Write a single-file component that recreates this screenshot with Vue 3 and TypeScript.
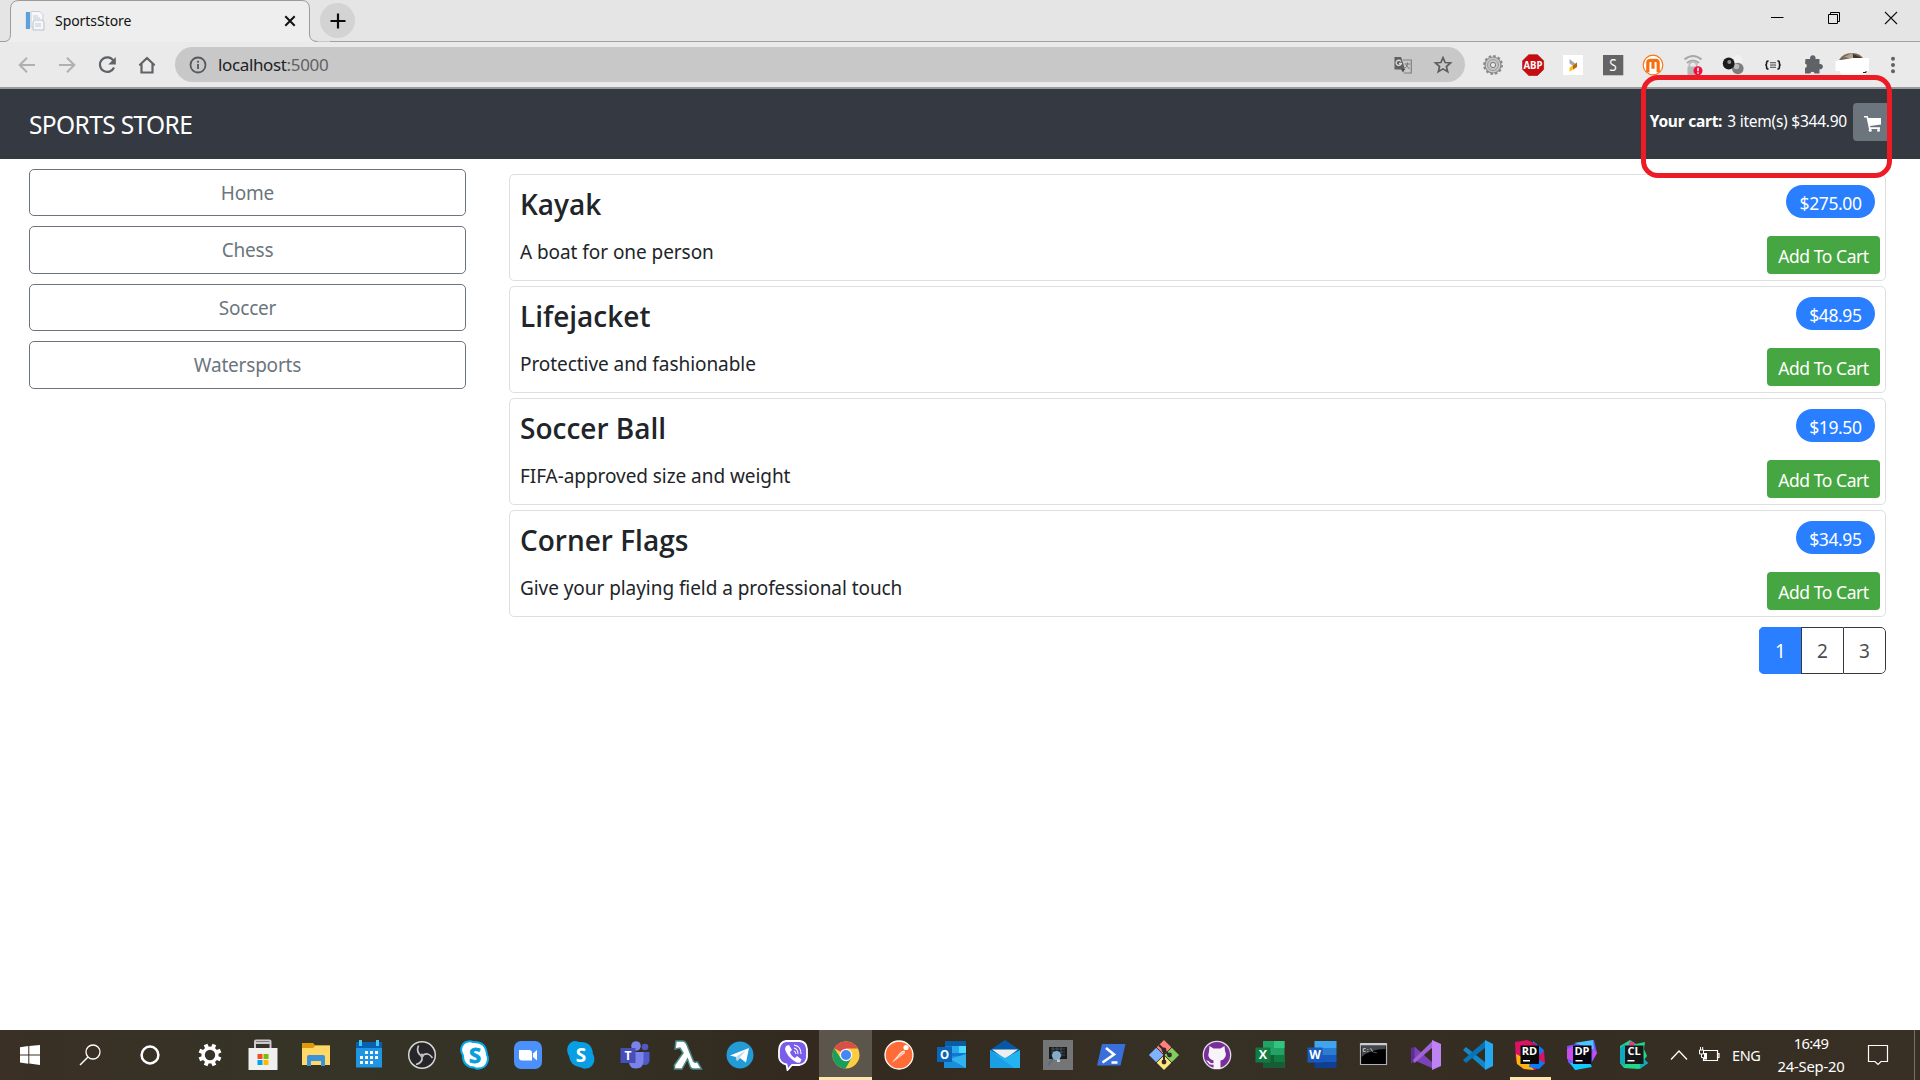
<script setup lang="ts">
interface Product { name: string; description: string; price: string }
interface Glyph { name: string; art: string; state?: string }

const categories: string[] = ['Home', 'Chess', 'Soccer', 'Watersports']

const products: Product[] = [
  { name: 'Kayak', description: 'A boat for one person', price: '$275.00' },
  { name: 'Lifejacket', description: 'Protective and fashionable', price: '$48.95' },
  { name: 'Soccer Ball', description: 'FIFA-approved size and weight', price: '$19.50' },
  { name: 'Corner Flags', description: 'Give your playing field a professional touch', price: '$34.95' },
]

const pages: number[] = [1, 2, 3]
const currentPage = 1

const label = 'font-family="Open Sans, sans-serif" text-anchor="middle"'

// Toolbar extensions, 24 x 24 grid
const extensions: Glyph[] = [
  { name: 'gear', art: '<circle cx="12" cy="12" r="8" fill="#c9c9c9" stroke="#8f8f8f" stroke-width="1.200"/><circle cx="12" cy="12" r="8.800" fill="none" stroke="#8a8a8a" stroke-width="2.200" stroke-dasharray="2.600 2"/><circle cx="12" cy="12" r="5.500" fill="#c4c4c4" stroke="#9a9a9a" stroke-width="1"/><circle cx="12" cy="12" r="2.600" fill="#e8e8e8" stroke="#777"/>' },
  { name: 'abp', art: `<path d="M7.800 1.700h8.700l6.100 6v8.700l-6.100 6.100H7.800l-6.200-6.100V7.700z" fill="#c70d12" stroke="#a5060b" stroke-width=".6"/><text x="12" y="15.800" ${label} font-size="10.500" font-weight="700" fill="#fff" textLength="19" lengthAdjust="spacingAndGlyphs">ABP</text>` },
  { name: 'flag', art: '<path d="M2 2h20v20H2z" fill="#fff"/><path d="M8.500 6l7.500 6-3 2-4.500-3.800z" fill="#a6a7ae"/><path d="M16 9.500V14l-7.500 4.800v-4z" fill="#ffbe10"/><path d="M16 9.500V14l-4 2.500v-4z" fill="#b5651d"/>' },
  { name: 's', art: `<path d="M2 2h20.300v20.300H2z" fill="#646464"/><text x="12" y="18" ${label} font-size="16.500" fill="#fff" textLength="7.500" lengthAdjust="spacingAndGlyphs">S</text>` },
  { name: 'm', art: '<circle cx="12" cy="12" r="9.800" fill="#fff" stroke="#f5761a" stroke-width="1.200"/><path d="M6.800 19.300V10q0-2.600 2.600-2.600h5.200q2.600 0 2.600 2.600v9.300M12 7.400v8.300" fill="none" stroke="#f5710f" stroke-width="3.200"/>' },
  { name: 'wifi', art: '<path d="M3.500 6.500q8.500-7 17 0M6 10q6-5 12 0" fill="none" stroke="#a8a8a8" stroke-width="2"/><path d="M8.300 14v-1.500a3.700 3.700 0 017.400 0V14" fill="none" stroke="#bdbdbd" stroke-width="2"/><path d="M6.500 13.500h11v8.500h-11z" fill="#b7b7b7"/><circle cx="17" cy="17.700" r="4.500" fill="#f30d3c"/><path d="M17 14.700v3.500M17 19.200v1.500" stroke="#fff" stroke-width="1.500"/>' },
  { name: 'balls', art: '<circle cx="16.500" cy="7" r="5" fill="#f1f1f1"/><circle cx="16.800" cy="15.500" r="5.800" fill="#7d7d7d"/><circle cx="15.500" cy="13.500" r="2.800" fill="#bcbcbc"/><circle cx="7.700" cy="10.500" r="5.900" fill="#1b1b1b"/><circle cx="8.300" cy="9" r="2" fill="#8d8d8d"/>' },
  { name: 'braces', art: '<path d="M7.600 8H7q-1.400 0-1.400 1.400v1Q5.600 12 4.300 12q1.300 0 1.300 1.600v1Q5.600 16 7 16h.6M16.400 8h.6q1.400 0 1.400 1.400v1q0 1.600 1.300 1.600-1.300 0-1.300 1.600v1Q18.400 16 17 16h-.6" fill="none" stroke="#1b1b1b" stroke-width="1.600"/><path d="M9 9.800h6M9 12h6M9 14.200h6" stroke="#444" stroke-width="1.100"/>' },
  { name: 'puzzle', art: '<path d="M4.500 6h4.700a2.800 2.800 0 115.200 0h4.100v5a2.700 2.700 0 110 5.200V20.500h-4.800a2.300 2.300 0 00-4.500 0H4v-5.400a2.300 2.300 0 000-4.500z" fill="#5f6368"/>' },
]

// Taskbar shortcuts, 32 x 32 grid
const shortcuts: Glyph[] = [
  { name: 'start', state: 'wide', art: '<path d="M6 8.300l8.300-1.200v8.300H6zM15.300 7L26 5.900v9.500H15.300zM6 16.400h8.300v8.400L6 23.600zM15.300 16.400H26v9.700l-10.700-1.500z" fill="#fff"/>' },
  { name: 'search', state: 'wide', art: '<circle cx="19" cy="13" r="7" fill="none" stroke="#fff" stroke-width="1.300"/><path d="M14 18L6 26" stroke="#fff" stroke-width="1.500"/>' },
  { name: 'cortana', state: 'wide', art: '<circle cx="16" cy="16" r="8.400" fill="none" stroke="#fff" stroke-width="2.500"/>' },
  { name: 'settings', state: 'settings', art: '<circle cx="16" cy="16" r="6.900" fill="none" stroke="#fff" stroke-width="3.400"/><g stroke="#fff" stroke-width="4"><path d="M23 13.100l3.600-1.500M18.900 9l1.500-3.600M13.100 9l-1.500-3.600M9 13.100l-3.600-1.500M9 18.900l-3.600 1.500M13.100 23l-1.500 3.600M18.900 23l1.500 3.600M23 18.900l3.600 1.500"/></g>' },
  { name: 'store', art: '<path d="M8 10V2.500q0-1 1-1h13.500q1 0 1 1V10M8 4h15.500" fill="none" stroke="#cdc8cf" stroke-width="2"/><path d="M1.500 9h29v22h-29z" fill="#f1f0f1"/><path d="M10.500 15h5v5h-5z" fill="#f24f1c"/><path d="M16.500 15h5v5h-5z" fill="#80bb00"/><path d="M10.500 21h5v5h-5z" fill="#00a3ee"/><path d="M16.500 21h5v5h-5z" fill="#ffb800"/>' },
  { name: 'folder', art: '<path d="M2 4h11l2.500 2.500H30V26H2z" fill="#df9b07"/><path d="M2 9h11l2.500-2.500H30V26H2z" fill="#ffd867"/><path d="M7 27V18q0-2 2-2h14q2 0 2 2v9h-4v-5H11v5z" fill="#3a91dc"/>' },
  { name: 'calendar', art: '<path d="M3 4h26v24.500H3z" fill="#1e96e3"/><path d="M3 3h26v6H3z" fill="#0860b0"/><path d="M6 1h3v6H6zM23 1h3v6h-3z" fill="#43c9f4"/><path d="M12 12h3v3h-3zm5 0h3v3h-3zm5 0h3v3h-3zM7 17h3v3H7zm5 0h3v3h-3zm5 0h3v3h-3zm5 0h3v3h-3zM7 22h3v3H7zm5 0h3v3h-3zm5 0h3v3h-3z" fill="#fff"/>' },
  { name: 'obs', art: '<circle cx="16" cy="16" r="13.300" fill="#262528" stroke="#d7d6d8" stroke-width="1.500"/><g fill="none" stroke="#c8c6ca" stroke-width="1.700"><path d="M16 17Q9.500 14 12.500 6.500M16 17q6-5 10.500 2M16 17q1 7-6 8.500"/></g><circle cx="16" cy="16.500" r="2" fill="#bbb"/>' },
  { name: 'skype', art: `<path d="M9 2.500q3-.5 5 .5 13-1 14 13 2 3 0 8-2 5-8 5.500-3 .5-5-1Q4 28 3.800 16 1 12 3 7q2-4 6-4.500z" fill="#fff" stroke="#05a9e9" stroke-width="2"/><text x="16" y="24" ${label} font-size="22" font-weight="700" fill="#079edb" stroke="#079edb" stroke-width=".8">S</text>` },
  { name: 'zoom', art: '<rect x="2" y="2" width="28" height="28" rx="7" fill="#4b90fb"/><path d="M7 11h10q3 0 3 3v7.500H10q-3 0-3-3zM21 14.500l4-3.500v10.500L21 18z" fill="#fff"/>' },
  { name: 'skype-business', art: `<path d="M9 2q3 0 5 1 13-1 14 12 2 3 1 8-2 6-8 6.500-3 .5-5-1Q5 27 4 17 1 12 3 7q2-4 6-5z" fill="#079ee4"/><text x="16" y="22.500" ${label} font-size="19" font-weight="700" fill="#fff">S</text>` },
  { name: 'teams', art: `<circle cx="18" cy="7" r="4.800" fill="#7b83eb"/><circle cx="27" cy="8" r="3.300" fill="#5059c9"/><path d="M21 13h10.500v8q0 5-5 5-3.500 0-5.500-2z" fill="#5059c9"/><path d="M11 13h14.500v9q0 7.500-7.500 7.500-6 0-7-5.500z" fill="#7b83eb"/><path d="M2.500 9h15v15h-15z" fill="#464eb8"/><text x="10" y="21" ${label} font-size="12" font-weight="700" fill="#fff">T</text>` },
  { name: 'lambda', art: '<path d="M5 2h6.500q3 0 4.500 4l6 15q1 3 3 2h1.500l4 7h-8q-3 0-4-4l-2-6-5.500 10H3.500v-4l8.500-12-3-5-5 1z" fill="#fff" stroke="#4c8988" stroke-width="1.500"/>' },
  { name: 'telegram', art: '<circle cx="16" cy="16" r="13.500" fill="#239bd7"/><path d="M6 16.500L25 9l-3 14.500-6-4.500-3 3-1-4z" fill="#fff"/><path d="M12 18l10-7-9 11z" fill="#b7d8ea"/>' },
  { name: 'viber', art: '<path d="M9 2h14q6.500 1 7 8v8q-.5 7-8 8h-7l-4.500 5-1-5.500Q2.500 24 2 18v-7Q2.500 3 9 2z" fill="#7b5deb" stroke="#fff" stroke-width="1.800"/><path d="M9 7l3-1 3 5-2 2q1 4 5 6l2-2 4.500 3.500-1.500 3q-2 1-5-1Q9.500 17 8 10z" fill="#fff"/><path d="M17 6q7 1 7 9M17 9q4 1 4 6M17 12q1.500.5 2 3" fill="none" stroke="#fff" stroke-width="1.100"/>' },
  { name: 'chrome', state: 'focused', art: '<circle cx="16" cy="16" r="13.500" fill="#ffcd42"/><path d="M16 16L4.300 9.200A13.500 13.500 0 0127.700 9.500H16z" fill="#da4f43"/><path d="M4.300 9.200A13.500 13.500 0 0015.500 29.500L21.500 19l-5.500 3-5.500-3z" fill="#199e5e"/><circle cx="16" cy="16" r="6.200" fill="#f5f5f5"/><circle cx="16" cy="16" r="5" fill="#4587f4"/>' },
  { name: 'postman', art: '<circle cx="16" cy="16" r="14" fill="#ff6c37" stroke="#fff" stroke-width="1.300"/><path d="M8.500 24l9-11q1.500-1.500 4-1.500l.5 2.500-6.500 5z" fill="#ffe5db"/><circle cx="23" cy="8.500" r="2.600" fill="#fff"/><path d="M13 17.500l5.500-5.500M15 18.500l5.500-5.500" stroke="#f08a63" stroke-width=".8"/>' },
  { name: 'outlook', art: `<path d="M9 2.500h21V23H9z" fill="#0f78d4"/><path d="M9 2.500h21V7H9z" fill="#075da8"/><path d="M16 7h7v7h-7z" fill="#28a8ea"/><path d="M23 7h7v7h-7z" fill="#50d9ff"/><path d="M8 17h22v12H8z" fill="#1b8edb"/><path d="M30 15v14L14 20z" fill="#31b4ed"/><path d="M1 8h15v15H1z" fill="#0a65b8"/><text x="8.500" y="19.800" ${label} font-size="11.500" font-weight="700" fill="#fff">O</text>` },
  { name: 'mail', art: '<path d="M1 11L16 1l15 10v18H1z" fill="#0758a4"/><path d="M3 10.500h26L16 20z" fill="#eeedf0"/><path d="M1 11l15 8 15-8v18H1z" fill="#23b3ee"/><path d="M1 11l24 18H1z" fill="#1a9fe4"/>' },
  { name: 'monitor', art: '<path d="M1 1h30v30H1z" fill="#747577"/><path d="M7 8h18v12H7z" fill="#181b1e"/><path d="M9 10h14M9 13h14M9 16h14M11 8v10M15 8v10M19 8v10" stroke="#596066" stroke-width=".7"/><circle cx="14.500" cy="16.500" r="4" fill="#7daccc" stroke="#93b5ca"/><path d="M11 20l-5 6" stroke="#516b80" stroke-width="1.500"/><path d="M15 20.500h3v2.500h-3z" fill="#ccc"/>' },
  { name: 'powershell', art: '<path d="M7 5h23.500l-5 21.500H2z" fill="#396fdb"/><path d="M11 9l8 6.500-11.500 8M16.500 23.500h6" fill="none" stroke="#fff" stroke-width="2.600"/>' },
  { name: 'git', art: '<g transform="rotate(45 16 16)"><path d="M5.500 5.500h10v10h-10z" fill="#ff8080"/><path d="M16.500 5.500h10v10h-10z" fill="#80cf5c"/><path d="M5.500 16.500h10v10h-10z" fill="#80b3ff"/><path d="M16.500 16.500h10v10h-10z" fill="#ffe680"/></g><g transform="rotate(45 16 16)"><path d="M5.500 5.500h10v10h-10z" fill="#ff8080"/><path d="M16.500 5.500h10v10h-10z" fill="#80cf5c"/><path d="M16.500 16.500h10v10h-10z" fill="#ffe680"/><path d="M5.500 16.500h10v10h-10z" fill="#80b3ff"/></g><path d="M11 6l5 5v13M16 11l5 5" fill="none" stroke="#352a25" stroke-width="2"/><circle cx="16" cy="11" r="2.400" fill="#352a25"/><circle cx="21.500" cy="16" r="2.400" fill="#352a25"/><circle cx="16" cy="23" r="2.400" fill="#352a25"/>' },
  { name: 'github', art: '<circle cx="16" cy="16" r="13.700" fill="#792e9b" stroke="#e4dce7" stroke-width="1.300"/><path d="M8.500 7l4 2.500h7l4-2.500.5 5q2 4-.5 7-1 2-4 2.500v8q-3.500 1-7 0v-4q-4 1-5.500-2l-2-2q3-.5 4 2 1.500 1 3.500.5v-2.500q-7-2-4.500-9z" fill="#f7f3f8"/>' },
  { name: 'excel', art: `<path d="M9 2h21.500v27H9z" fill="#21a366"/><path d="M20 2h10.500v7H20z" fill="#33c481"/><path d="M9 16h21.500v13H9z" fill="#185c37"/><path d="M20 16h10.500v7H20z" fill="#107c41"/><path d="M1.500 8.500h15v15h-15z" fill="#107c41"/><text x="9" y="20.300" ${label} font-size="12.500" font-weight="700" fill="#fff">X</text>` },
  { name: 'word', art: `<path d="M8.500 2h22v7h-22z" fill="#41a5ee"/><path d="M8.500 9h22v7h-22z" fill="#2b7cd3"/><path d="M8.500 16h22v7h-22z" fill="#185abd"/><path d="M8.500 23h22v6h-22z" fill="#103f91"/><path d="M1.500 8.500h15v15h-15z" fill="#185abd"/><text x="9" y="20.300" ${label} font-size="12" font-weight="700" fill="#fff">W</text>` },
  { name: 'terminal', art: '<path d="M2.500 4.500h26v21h-26z" fill="#000" stroke="#aeb2b6" stroke-width="1.200"/><path d="M2.500 4h26v2.500h-26z" fill="#c9ced3"/><path d="M3.500 7h24v3Q13 10 3.500 18z" fill="#44474b"/><text x="4.500" y="13" font-family="Liberation Mono, monospace" font-size="6" fill="#fff">C:\\_</text>' },
  { name: 'visual-studio', art: '<path d="M1 9.500L5 8l18 16v5.500L6 22 1 24z" fill="#7c42b8"/><path d="M1 9.500L4.500 8v16L1 22.500z" fill="#5d2e91"/><path d="M4.500 24L23 8V1.500L3 21z" fill="#a063d8"/><path d="M22 1l9 4v22l-9 4z" fill="#bd83f2"/>' },
  { name: 'vs-code', art: '<path d="M1 11l3-3 20 16v7z" fill="#1287ca"/><path d="M1 21l3 3L24 8V1z" fill="#0874b8"/><path d="M23 1l8 4v22l-8 4z" fill="#25a9f2"/>' },
  { name: 'rider', state: 'running', art: `<path d="M1 3l12-2 9 4 8 7 1 12-10 7-12-1-7-7z" fill="#dd1265"/><path d="M2 15l10 5 8 11-10-1-7-5z" fill="#fdb60d"/><path d="M19 2l11 9-7 9 8 4-6 6-10-2z" fill="#087cfa"/><path d="M17 3l5 2 5 15-9-4z" fill="#c70e58"/><path d="M6.500 6.500h18.500V25H6.500z" fill="#090909"/><text x="15.500" y="16" ${label} font-size="11" font-weight="700" fill="#fff">RD</text><path d="M9 21h7v1.500H9z" fill="#fff"/>` },
  { name: 'dotpeek', art: `<path d="M1 7l27-6 3 13-6 11-15 6L2 23z" fill="#6b57ff"/><path d="M8 4l19-3 1 10-10-4z" fill="#4cc4ff"/><path d="M1 10l8-4v16l-8-2zM27 9l4 5-5 8z" fill="#c94eeb"/><path d="M4 24l19-2 3 6-17 3z" fill="#13c8fa"/><path d="M7 6.500h18.500V25H7z" fill="#07040f"/><text x="16" y="16" ${label} font-size="11" font-weight="700" fill="#fff">DP</text><path d="M9.500 21h7v1.500h-7z" fill="#fff"/>` },
  { name: 'clion', art: `<path d="M2 7l10-6 6 4 9-2-1 7 3 7-3 4 4 3-9 6-15-1-4-5z" fill="#21d789"/><path d="M2 9l5-4v22l-5-3zM22 15l8 9-8 6z" fill="#10a9bd"/><path d="M12 2l6 3-8 4z" fill="#ed358c"/><path d="M7 6.500h18.500V25H7z" fill="#171717"/><text x="16" y="16" ${label} font-size="11" font-weight="700" fill="#fff">CL</text><path d="M9.500 21h7v1.500h-7z" fill="#fff"/>` },
]
</script>

<template>
  <div class="screen">
    <div class="tabstrip">
      <svg class="tab-shape" width="330" height="42" viewBox="0 0 330 42">
        <path d="M0 41.500h4q6.500 0 6.500-7V9Q10.500.5 19 .5h283Q309.500.5 309.500 9v25q0 7.500 8 7.500H330V42H0z" fill="#eee" />
        <path d="M0 41.500h4q6.500 0 6.500-7V9Q10.500.5 19 .5h283Q309.500.5 309.500 9v25q0 7.500 8 7.500" fill="none" stroke="#9b9b9b" />
      </svg>
      <div class="tab">
        <svg width="20" height="20" viewBox="0 0 20 20">
          <path d="M6 .5h9l3 3V16H6z" fill="#f7f8fa" stroke="#c8cdd4" />
          <path d="M1 1h4v17H1z" fill="#5ba2da" /><path d="M0 1h1v17H0z" fill="#d5e5f0" />
          <path d="M9 9h8l2 2v8H8v-8z" fill="#f5f6fa" stroke="#bbc0cb" />
          <path d="M8 5h5M8 7h7M10 13h6M10 15h6" stroke="#c5cad7" />
        </svg>
        <span class="tab-title">SportsStore</span>
        <svg class="tab-close" width="12" height="12" viewBox="0 0 12 12"><path d="M1.300 1.300l9.400 9.400M10.700 1.300l-9.400 9.400" stroke="#111" stroke-width="2" /></svg>
      </div>
      <div class="new-tab"><svg width="16" height="16" viewBox="0 0 16 16"><path d="M8 .5v15M.5 8h15" stroke="#0b0b0b" stroke-width="2.200" /></svg></div>
      <div class="window-controls">
        <svg width="14" height="14" viewBox="0 0 14 14"><path d="M1 6.500h12.500" stroke="#000" /></svg>
        <svg width="14" height="14" viewBox="0 0 14 14"><path d="M1.500 3.500h9v9h-9zM3.500 3.500v-2h9v9h-2" fill="none" stroke="#000" /></svg>
        <svg width="14" height="14" viewBox="0 0 14 14"><path d="M1 1l12 12M13 1L1 13" stroke="#111" stroke-width="1.100" /></svg>
      </div>
    </div>

    <div class="toolbar">
      <div class="nav-icons">
        <svg width="24" height="24" viewBox="0 0 24 24"><path d="M20 12H5M12 4.700L4.700 12l7.300 7.300" fill="none" stroke="#b0b0b0" stroke-width="2" /></svg>
        <svg width="24" height="24" viewBox="0 0 24 24"><path d="M4 12h15M12 4.700l7.300 7.300-7.300 7.300" fill="none" stroke="#b0b0b0" stroke-width="2" /></svg>
        <svg width="24" height="24" viewBox="0 0 24 24"><path d="M18.300 7.500A7.300 7.300 0 1019 14.500" fill="none" stroke="#5f6368" stroke-width="2.200" /><path d="M20.800 4v7.500h-7.500z" fill="#5f6368" /></svg>
        <svg width="24" height="24" viewBox="0 0 24 24"><path d="M12 5l7 6.700M12 5l-7 6.700M6.500 11v8.500h11V11" fill="none" stroke="#5f6368" stroke-width="2.200" stroke-linecap="round" /></svg>
      </div>
      <div class="omnibox">
        <svg width="18" height="18" viewBox="0 0 18 18"><circle cx="9" cy="9" r="7.500" fill="none" stroke="#55595d" stroke-width="1.800" /><path d="M9 8v5M9 4.700v2" stroke="#55595d" stroke-width="1.800" /></svg>
        <span class="url">localhost<span>:5000</span></span>
        <svg class="translate" width="18" height="18" viewBox="0 0 18 18">
          <path d="M9 4h8.300v13H10" fill="none" stroke="#808080" stroke-width="1.200" />
          <path d="M.5 1H7l1 2.500 3 10H.5z" fill="#5f6063" /><path d="M7 13h4l-2 3.500z" fill="#4b4c4e" />
          <path d="M10.500 8H16M13.500 6.500V8q-.5 3-2.500 4M12 9l3.500 4" fill="none" stroke="#777" />
          <path d="M7 5.500A2.600 2.600 0 107.300 7.500H5" fill="none" stroke="#ddd" stroke-width="1.300" />
        </svg>
        <svg class="star" width="20" height="20" viewBox="0 0 20 20"><path d="M10 2.600l2.100 4.900 5.400.5-4.100 3.500 1.300 5.300-4.700-2.900-4.700 2.900 1.300-5.300L2.500 8l5.400-.5z" fill="none" stroke="#5a5e62" stroke-width="1.700" /></svg>
      </div>
      <div class="extensions">
        <svg v-for="item in extensions" :key="item.name" width="24" height="24" viewBox="0 0 24 24" v-html="item.art" />
      </div>
      <svg class="avatar" width="34" height="26" viewBox="0 0 34 26">
        <path d="M4 8Q8 1 17 1q9 0 12 7z" fill="#75685d" /><path d="M9 5l8-4 3 6z" fill="#b5a28c" /><path d="M18 2l9 4H18z" fill="#40352e" />
        <path d="M.5 9L12 7l5-1h17v13h-3v5H7q-2-2-2-5H.500z" fill="#fff" /><path d="M28 20.500h3V19" fill="none" stroke="#222" />
      </svg>
      <svg class="menu" width="6" height="18" viewBox="0 0 6 18"><g fill="#5f6368"><circle cx="3" cy="2.700" r="2" /><circle cx="3" cy="9" r="2" /><circle cx="3" cy="15.300" r="2" /></g></svg>
    </div>

    <header class="navbar">
      <a class="brand">SPORTS STORE</a>
      <div class="cart">
        <span class="cart-text"><b>Your cart:</b> <span>3 item(s) $344.90</span></span>
        <a class="cart-button">
          <svg width="18" height="16" viewBox="0 0 18 16"><path d="M0 0h3.700l.7 2H17v6.500L6 10l.4 1.300H16V13H5L2.500 1.600H0z" fill="#fff" /><circle cx="6.200" cy="14.300" r="1.500" fill="#fff" /><circle cx="14.500" cy="14.300" r="1.500" fill="#fff" /></svg>
        </a>
      </div>
    </header>

    <main class="page">
      <nav class="categories">
        <a v-for="category in categories" :key="category">{{ category }}</a>
      </nav>
      <section class="products">
        <article v-for="product in products" :key="product.name" class="card">
          <div class="info">
            <h4>{{ product.name }}</h4>
            <p>{{ product.description }}</p>
          </div>
          <div class="actions">
            <span class="badge">{{ product.price }}</span>
            <button type="button">Add To Cart</button>
          </div>
        </article>
        <div class="pager">
          <a v-for="page in pages" :key="page" :class="{ current: page === currentPage }">{{ page }}</a>
        </div>
      </section>
    </main>

    <footer class="taskbar">
      <div v-for="item in shortcuts" :key="item.name" class="shortcut" :class="item.state">
        <svg width="32" height="32" viewBox="0 0 32 32" v-html="item.art" />
      </div>
      <div class="tray">
        <svg class="chevron" width="18" height="12" viewBox="0 0 18 12"><path d="M1 10.500l8-8.500 8 8.500" fill="none" stroke="#fff" stroke-width="1.300" /></svg>
        <svg class="battery" width="22" height="16" viewBox="0 0 22 16"><path d="M6 3.500h13.500v10h-14v-3M20 6.500h1v4h-1" fill="none" stroke="#fff" stroke-width="1.200" /><path d="M1.500 3h4v4h-4zM2.500 0v3M4.700 0v3M3.500 7v3.500h2" fill="none" stroke="#fff" /><path d="M6 6h3v6.500H6z" fill="#fff" /></svg>
        <span class="language">ENG</span>
        <div class="clock"><span class="time">16:49</span><span class="date">24-Sep-20</span></div>
        <svg class="notice" width="22" height="22" viewBox="0 0 22 22"><path d="M1.500 1.500h19v16h-6.500l-3 3-3-3H1.500z" fill="none" stroke="#fff" stroke-width="1.200" /></svg>
      </div>
    </footer>

    <div class="callout"></div>
  </div>
</template>

<style>
body { overflow: hidden; background: #fff; }
</style>

<style scoped>
.screen { position: relative; width: 1920px; height: 1080px; display: flex; flex-direction: column; overflow: hidden; font-family: "Noto Sans", "Open Sans", sans-serif; color: #212529; background: #fff; }
.screen * { box-sizing: border-box; }
svg { display: block; flex: none; }

.tabstrip { position: relative; height: 42px; flex: none; display: flex; background: #e5e5e5; border-bottom: 1px solid #a2a2a2; }
.tab-shape { position: absolute; left: 0; top: 0; }
.tab { position: relative; width: 299px; margin-left: 11px; padding: 0 14px; height: 41px; display: flex; align-items: center; }
.tab-title { margin-left: 10px; font-size: 14px; color: #111; letter-spacing: -.05px; }
.tab-close { margin-left: auto; }
.new-tab { position: relative; width: 35px; height: 35px; margin: 3px 0 0 10px; border-radius: 50%; background: #d3d3d3; display: flex; align-items: center; justify-content: center; }
.window-controls { margin: 11px 22px 0 auto; display: flex; gap: 43px; }

.toolbar { height: 47px; flex: none; display: flex; align-items: center; background: #eaeaea; border-bottom: 2px solid #999b9b; }
.nav-icons { display: flex; gap: 16px; margin-left: 15px; }
.omnibox { margin-left: 16px; width: 1290px; height: 35px; border-radius: 18px; background: #c8c8c8; display: flex; align-items: center; padding: 0 12px 0 14px; }
.url { margin-left: 11px; font-size: 17px; letter-spacing: -.36px; line-height: 24px; color: #202124; }
.url span { color: #606264; }
.translate { margin-left: auto; }
.star { margin: 0 0 0 21px; }
.extensions { display: flex; gap: 16px; margin-left: 15.500px; }
.avatar { margin-left: 10px; }
.menu { margin-left: 21px; }

.navbar { height: 70px; flex: none; display: flex; align-items: center; justify-content: space-between; background: #353a42; color: #fff; padding: 0 31px 0 29px; }
.brand { font-size: 24.500px; letter-spacing: -.62px; line-height: 34px; margin-top: 2px; }
.cart { display: flex; align-items: center; margin-top: -4px; }
.cart-text { display: flex; gap: 5px; font-size: 15.500px; line-height: 24px; margin-top: -2px; letter-spacing: -.24px; }
.cart-button { width: 36px; height: 38px; margin-left: 6px; border-radius: 4px 0 0 4px; background: #6c757d; padding: 13px 0 0 11px; }

.page { display: flex; flex: 1; min-height: 0; padding: 0 34px 0 29px; }
.categories { width: 437px; padding-top: 9.750px; display: flex; flex-direction: column; gap: 10px; }
.categories a { height: 47.500px; border: 1px solid #6c757d; border-radius: 5px; color: #6c757d; text-align: center; font-size: 19px; line-height: 46px; letter-spacing: -.2px; }
.products { margin-left: 43px; flex: 1; padding-top: 15px; display: flex; flex-direction: column; }
.card { height: 107px; margin-bottom: 5px; border: 1px solid #dfdfdf; border-radius: 5px; display: flex; justify-content: space-between; padding: 9px 5px 5px 10px; }
h4 { margin: 0; font-family: "Open Sans", "Noto Sans", sans-serif; font-weight: 600; font-size: 28px; line-height: 40px; letter-spacing: 0; }
p { margin: 10px 0 0; font-size: 19px; line-height: 36px; letter-spacing: -.06px; }
.actions { display: flex; flex-direction: column; align-items: flex-end; padding-top: 1px; }
.badge { height: 33px; margin-right: 5px; padding: 0 13.500px; border-radius: 17px; background: #297fff; color: #fff; font-size: 17.500px; line-height: 37px; letter-spacing: -.4px; }
button { margin-top: 18px; width: 113px; height: 38px; padding: 1px 0 0; border: 0; border-radius: 4px; background: #46a742; color: #fff; font: 17.500px/38px "Noto Sans", sans-serif; letter-spacing: -.45px; }
.pager { display: flex; align-self: flex-end; margin-top: 5px; width: 127px; height: 47px; border-radius: 5px; overflow: hidden; }
.pager a { flex: 1; text-align: center; font-size: 19px; line-height: 46px; color: #4a4e52; border: 1px solid #343a40; border-right-width: 0; }
.pager a:last-child { border-right-width: 1px; border-radius: 0 5px 5px 0; }
.pager a.current { color: #fff; background: #297fff; border-color: #297fff; }

.taskbar { height: 50px; flex: none; display: flex; background: linear-gradient(90deg, #3a3025, #363327 15%, #343125 30%, #33291f 42%, #373024 60%, #352d22 80%, #393025); }
.shortcut { width: 53px; flex: none; display: flex; align-items: center; justify-content: center; }
.shortcut.wide { width: 60px; }
.shortcut.settings { width: 56px; padding-left: 3px; }
.shortcut:nth-child(n + 25) { width: 52px; }
.shortcut.focused { background: #5c554c; border-bottom: 3px solid #ffe6ae; padding-top: 3px; }
.shortcut.running { background: linear-gradient(#ffe6ae, #ffe6ae) center bottom / 41px 3px no-repeat; }
.tray { flex: 1; display: flex; align-items: center; color: #fff; position: relative; }
.tray::after { content: ""; position: absolute; right: 5px; top: 0; width: 1px; height: 50px; background: #77716a; }
.chevron { margin-left: 10px; }
.battery { margin-left: 10px; }
.language { width: 31px; margin-left: 12px; font-size: 14.500px; letter-spacing: -.4px; white-space: nowrap; }
.clock { width: 80px; margin-left: 8px; display: flex; flex-direction: column; align-items: center; font-size: 14.800px; line-height: 23px; letter-spacing: -.2px; white-space: nowrap; }
.time { letter-spacing: -.7px; }
.notice { margin-left: 16px; }

.callout { position: absolute; left: 1641px; top: 75px; width: 251px; height: 103px; border: 5px solid #ed1c24; border-radius: 17px; }
</style>
